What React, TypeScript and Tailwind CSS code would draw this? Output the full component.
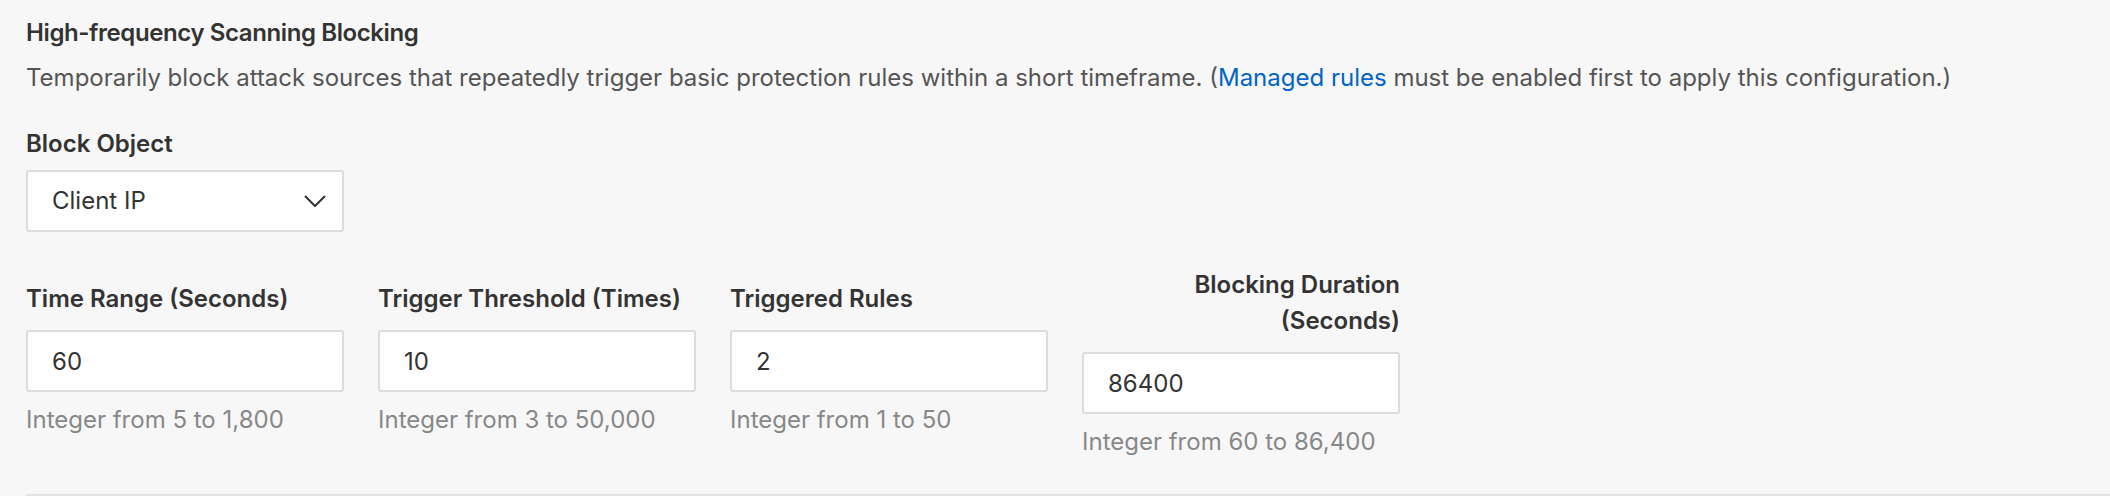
import React from 'react'

interface FieldProps {
  label: string
  value: string
  hint: string
  alignRight?: boolean
  className?: string
}

const Field: React.FC<FieldProps> = ({ label, value, hint, alignRight, className = '' }) => (
  <div className={`flex w-[318px] flex-col ${className}`}>
    <label
      className={`text-[24px] font-semibold leading-[36px] text-[#333333] ${alignRight ? 'text-right' : ''}`}
    >
      {label}
    </label>
    <input
      readOnly
      value={value}
      className="mt-[13px] h-[62px] w-full rounded-[3px] border-2 border-[#dcdcdc] bg-white px-6 text-[24px] text-[#333333] outline-none"
    />
    <p className="mt-[10px] text-[24px] leading-[36px] text-[#888888]">{hint}</p>
  </div>
)

export default function App() {
  return (
    <div className="min-h-[496px] w-full bg-[#f7f7f7] pl-[26px] pt-[15px] font-['Inter','Liberation_Sans',sans-serif]">
      <h2 className="text-[24px] font-semibold leading-[36px] tracking-[-0.4px] text-[#333333]">
        High-frequency Scanning Blocking
      </h2>
      <p className="mt-[9px] text-[24px] leading-[36px] text-[#555555]">
        Temporarily block attack sources that repeatedly trigger basic protection rules within a short
        timeframe. (<a className="text-[#0064c8]">Managed rules</a> must be enabled first to apply this
        configuration.)
      </p>

      {/* Block object */}
      <div className="mt-[30px]">
        <div className="text-[24px] font-semibold leading-[36px] text-[#333333]">Block Object</div>
        <div className="mt-[8px] flex h-[62px] w-[318px] items-center justify-between rounded-[3px] border-2 border-[#dcdcdc] bg-white pl-6 pr-[16px]">
          <span className="text-[24px] text-[#333333]">Client IP</span>
          <svg width="22" height="12" viewBox="0 0 22 12" fill="none">
            <polyline points="1,1 11,11 21,1" stroke="#333333" strokeWidth="2" strokeLinejoin="round" />
          </svg>
        </div>
      </div>

      {/* Thresholds */}
      <div className="mt-[35px] flex items-start gap-[34px]">
        <Field className="mt-[14px]" label="Time Range (Seconds)" value="60" hint="Integer from 5 to 1,800" />
        <Field className="mt-[14px]" label="Trigger Threshold (Times)" value="10" hint="Integer from 3 to 50,000" />
        <Field className="mt-[14px]" label="Triggered Rules" value="2" hint="Integer from 1 to 50" />
        <Field
          label="Blocking Duration (Seconds)"
          value="86400"
          hint="Integer from 60 to 86,400"
          alignRight
        />
      </div>

      <div className="mt-[34px] h-[2px] bg-[#e3e3e3]" />
    </div>
  )
}
